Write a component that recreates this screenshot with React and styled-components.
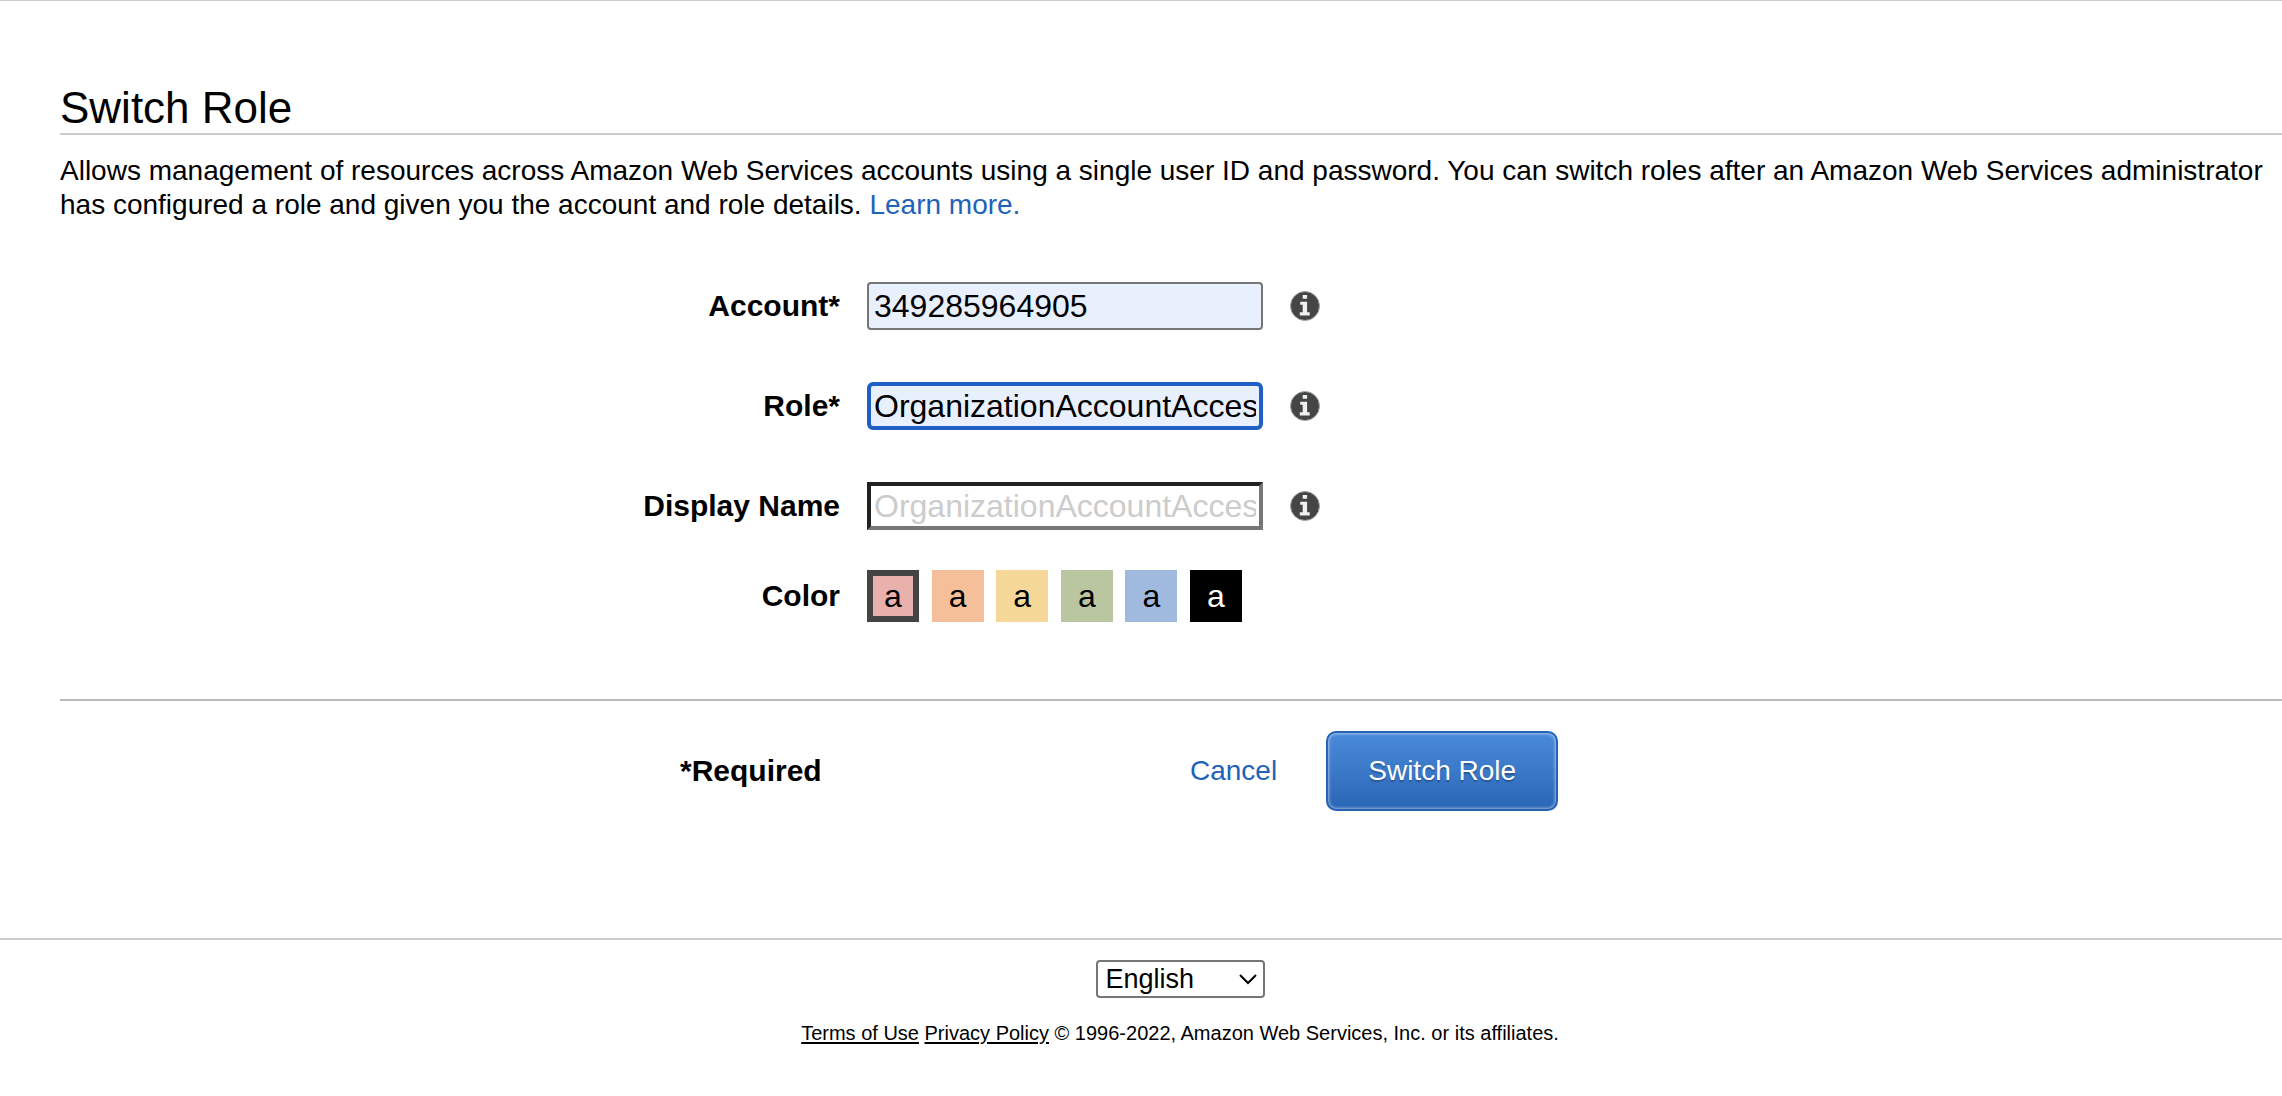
import React, { useState } from "react";
import styled, { createGlobalStyle } from "styled-components";

const GlobalStyle = createGlobalStyle`
  *, *::before, *::after { box-sizing: border-box; }
  body {
    margin: 0;
    background: #fff;
    color: #000;
    font: 28px/34px "Liberation Sans", Arial, Helvetica, sans-serif;
    overflow-x: hidden;
  }
  button, input, select { font-family: inherit; margin: 0; }
`;

const Page = styled.div`
  border-top: 1px solid #ccc;
`;

const Main = styled.main`
  padding: 82px 0 0 60px;
`;

const Title = styled.h1`
  margin: 0;
  border-bottom: 2px solid #ccc;
  font-size: 44px;
  line-height: 50px;
  font-weight: 400;
`;

const Intro = styled.p`
  margin: 0;
  padding-top: 19px;
`;

const TextLink = styled.a`
  color: #1f62b9;
  text-decoration: none;
`;

const Form = styled.form`
  padding-top: 60px;
`;

const Fields = styled.div`
  display: grid;
  row-gap: 52px;
`;

const Row = styled.div`
  display: grid;
  grid-template-columns: 780px auto 1fr;
  column-gap: 27px;
  align-items: center;
  justify-items: start;
`;

const ColorRow = styled(Row)`
  padding-top: 40px;
`;

const Label = styled.label`
  justify-self: end;
  font-size: 30px;
  font-weight: 700;
`;

const borders = {
  filled: "border: 2px solid #767676; border-radius: 4px; padding: 0 5px;",
  active: "border: 4px solid #1f5fc6; border-radius: 6px; padding: 0 3px;",
  empty:
    "border: 4px solid; border-color: #212121 #767676 #767676 #212121; padding: 0 3px;",
};

const TextInput = styled.input`
  width: 396px;
  height: 48px;
  outline: none;
  color: #000;
  font-size: 32px;
  background: ${(p) => (p.$look === "empty" ? "#fff" : "#e8effd")};
  ${(p) => borders[p.$look]}
  &::placeholder { color: #ccc; opacity: 1; }
`;

const InfoButton = styled.button`
  display: flex;
  padding: 0;
  border: 0;
  background: none;
  cursor: pointer;
`;

const Swatches = styled.div`
  display: flex;
  justify-content: space-between;
  width: 375px;
`;

const Swatch = styled.label`
  display: grid;
  place-items: center;
  width: 52px;
  height: 52px;
  font-size: 32px;
  color: ${(p) => p.$ink};
  background: ${(p) => p.$fill};
  &:has(input:checked) { border: 6px solid #444; }
  > * { grid-area: 1 / 1; }
  input {
    appearance: none;
    width: 30px;
    height: 30px;
    outline: none;
    cursor: pointer;
  }
`;

const Actions = styled.div`
  display: flex;
  align-items: center;
  margin-top: 77px;
  padding: 30px 0 0 620px;
  border-top: 2px solid #bbb;
`;

const Required = styled.strong`
  width: 510px;
  font-size: 30px;
`;

const SubmitButton = styled.button`
  width: 232px;
  height: 80px;
  margin-left: 49px;
  padding: 0;
  border: 2px solid #2463b5;
  border-radius: 10px;
  background: linear-gradient(#4a8ada, #2b66b6);
  box-shadow: inset 0 0 3px 1px rgba(255, 255, 255, 0.5);
  color: #fff;
  font-size: 28px;
  text-shadow: 0 2px 1px rgba(0, 0, 0, 0.25);
  cursor: pointer;
`;

const Footer = styled.footer`
  display: flex;
  flex-direction: column;
  align-items: center;
  gap: 22px;
  margin-top: 127px;
  padding: 20px 0 0 78px;
  border-top: 2px solid #ccc;
`;

const LanguagePicker = styled.div`
  display: grid;
  align-items: center;
  > * { grid-area: 1 / 1; }
  svg {
    justify-self: end;
    margin-right: 8px;
    pointer-events: none;
  }
`;

const LanguageSelect = styled.select`
  appearance: none;
  width: 169px;
  height: 38px;
  padding: 0 32px 0 8px;
  border: 2px solid #767676;
  border-radius: 4px;
  background: #fff;
  color: #000;
  font-size: 27px;
`;

const Legal = styled.p`
  margin: 0;
  font-size: 20px;
  line-height: 26px;
  a {
    color: inherit;
    text-decoration-thickness: 2px;
    text-underline-offset: 2px;
  }
`;

function Info({ topic }) {
  return (
    <InfoButton type="button" aria-label={`About ${topic}`}>
      <svg width="30" height="30" viewBox="0 0 30 30" aria-hidden="true">
        <circle cx="15" cy="15" r="14.5" fill="#444645" stroke="#a5a6a6" />
        <path
          fill="#f0f0f0"
          d="M12.7 4h4.4v3.8h-4.4zM10.2 10.7h6.9v10.5h2.6v3.3H9.8v-3.3h2.9v-7.4h-2.5z"
        />
      </svg>
    </InfoButton>
  );
}

const colors = [
  { name: "Red", fill: "#e8b1ab" },
  { name: "Orange", fill: "#f4bf99" },
  { name: "Yellow", fill: "#f5d798" },
  { name: "Green", fill: "#bac6a0" },
  { name: "Blue", fill: "#9fbade" },
  { name: "Black", fill: "#000", ink: "#fff" },
];

export default function App() {
  const [color, setColor] = useState("Red");
  return (
    <Page>
      <GlobalStyle />
      <Main>
        <Title>Switch Role</Title>
        <Intro>
          Allows management of resources across Amazon Web Services accounts
          using a single user ID and password. You can switch roles after an
          Amazon Web Services administrator has configured a role and given you
          the account and role details. <TextLink href="#">Learn more.</TextLink>
        </Intro>
        <Form onSubmit={(e) => e.preventDefault()}>
          <Fields>
            <Row>
              <Label htmlFor="account">Account*</Label>
              <TextInput id="account" $look="filled" defaultValue="349285964905" />
              <Info topic="Account" />
            </Row>
            <Row>
              <Label htmlFor="role">Role*</Label>
              <TextInput
                id="role"
                $look="active"
                defaultValue="OrganizationAccountAccessRole"
              />
              <Info topic="Role" />
            </Row>
            <Row>
              <Label htmlFor="display">Display Name</Label>
              <TextInput
                id="display"
                $look="empty"
                placeholder="OrganizationAccountAccessRole"
              />
              <Info topic="Display Name" />
            </Row>
          </Fields>
          <ColorRow role="radiogroup" aria-labelledby="color-label">
            <Label as="span" id="color-label">Color</Label>
            <Swatches>
              {colors.map((c) => (
                <Swatch key={c.name} $fill={c.fill} $ink={c.ink || "#000"}>
                  <span>a</span>
                  <input
                    type="radio"
                    name="color"
                    aria-label={c.name}
                    checked={color === c.name}
                    onChange={() => setColor(c.name)}
                  />
                </Swatch>
              ))}
            </Swatches>
          </ColorRow>
          <Actions>
            <Required>*Required</Required>
            <TextLink href="#">Cancel</TextLink>
            <SubmitButton type="submit">Switch Role</SubmitButton>
          </Actions>
        </Form>
      </Main>
      <Footer>
        <LanguagePicker>
          <LanguageSelect aria-label="Language" defaultValue="en">
            <option value="en">English</option>
          </LanguageSelect>
          <svg width="18" height="12" viewBox="0 0 18 12" aria-hidden="true">
            <path d="M1 2l8 8 8-8" fill="none" stroke="#000" strokeWidth="2" />
          </svg>
        </LanguagePicker>
        <Legal>
          <a href="#">Terms of Use</a> <a href="#">Privacy Policy</a> © 1996-2022,
          Amazon Web Services, Inc. or its affiliates.
        </Legal>
      </Footer>
    </Page>
  );
}
